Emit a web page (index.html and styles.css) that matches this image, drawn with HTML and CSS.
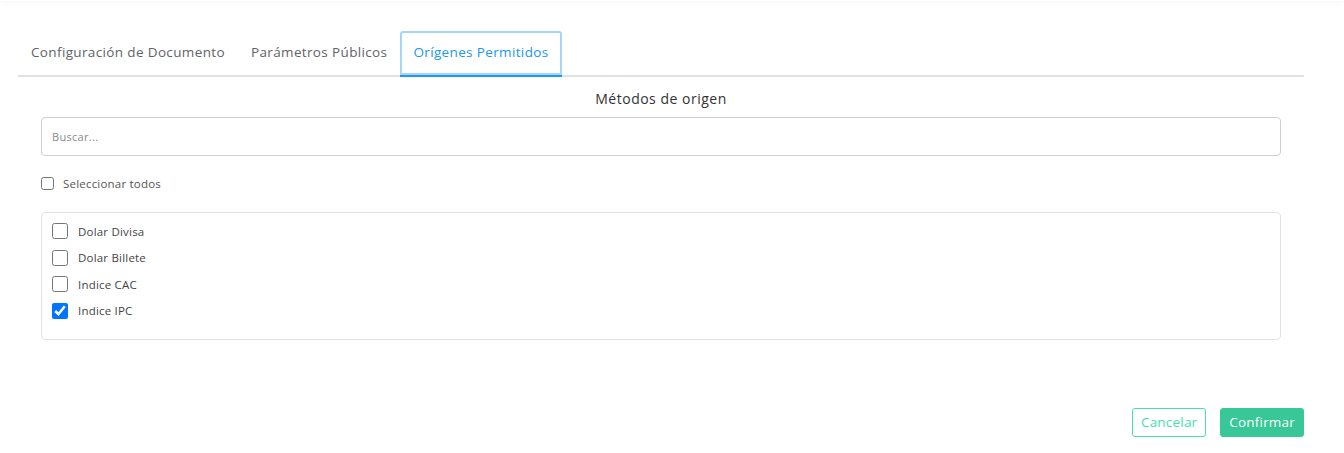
FILE: index.html
```html
<!DOCTYPE html>
<html>
  <head>
    <meta charset="utf-8" />
    <meta content="width=device-width, initial-scale=1" name="viewport" />
    <title>Orígenes Permitidos</title>
    <link rel="stylesheet" href="styles.css">
  </head>
  <body>
    <div class="topbar"></div>

    <div class="page">
      <div class="tabs">
        <div class="tab">Configuración de Documento</div>
        <div class="tab">Parámetros Públicos</div>
        <div class="tab active">Orígenes Permitidos</div>
      </div>

      <div class="panel">
        <div class="panel-title">Métodos de origen</div>

        <input class="search" type="text" placeholder="Buscar..." />

        <label class="select-all">
          <input type="checkbox" />
          <span>Seleccionar todos</span>
        </label>

        <div class="options">
          <label class="option"><input type="checkbox" /><span>Dolar Divisa</span></label>
          <label class="option"><input type="checkbox" /><span>Dolar Billete</span></label>
          <label class="option"><input type="checkbox" /><span>Indice CAC</span></label>
          <label class="option"><input type="checkbox" checked /><span>Indice IPC</span></label>
        </div>
      </div>

      <div class="actions">
        <button class="btn btn-outline">Cancelar</button>
        <button class="btn btn-primary">Confirmar</button>
      </div>
    </div>
  </body>
</html>
```

FILE: styles.css
```css
html, body {
  margin: 0;
  background-color: white;
}
body {
  font-family: "Open Sans", sans-serif;
  color: #333;
}
.topbar {
  height: 1px;
  box-shadow: 0 1px 4px rgba(0, 0, 0, 0.12);
}
.page {
  padding: 30px 40px 0 18px;
}
.tabs {
  display: flex;
  border-bottom: 2px solid #dee2e6;
}
.tab {
  padding: 0 13px;
  height: 44px;
  line-height: 42px;
  font-size: 13.5px;
  letter-spacing: 0.36px;
  color: #5f6368;
  margin-bottom: -2px;
  border-bottom: 2px solid transparent;
  white-space: nowrap;
}
.tab.active {
  color: #2196f3;
  border-bottom-color: #2196f3;
  box-shadow: inset 0 0 0 2px #a6d5fa;
  border-radius: 3px 3px 0 0;
}
.panel {
  padding: 0 23px;
}
.panel-title {
  text-align: center;
  font-size: 14px;
  letter-spacing: 0.5px;
  color: #333;
  line-height: 20px;
  margin-top: 12px;
  margin-bottom: 8px;
}
.search {
  display: block;
  box-sizing: border-box;
  width: 100%;
  height: 39px;
  border: 1px solid #cfcfcf;
  border-radius: 4px;
  padding: 0 10px;
  font-family: inherit;
  font-size: 11px;
  letter-spacing: 0.3px;
  color: #333;
  outline: none;
}
.search::placeholder {
  color: #8a8a8a;
}
.select-all {
  display: flex;
  align-items: center;
  gap: 9px;
  margin-top: 20px;
  font-size: 11.5px;
  letter-spacing: 0.2px;
  color: #555;
}
.select-all input {
  width: 13px;
  height: 13px;
  margin: 0;
}
.options {
  margin-top: 21px;
  border: 1px solid #e2e2e2;
  border-radius: 4px;
  padding: 10px 10px 20px;
  display: flex;
  flex-direction: column;
  gap: 10.6px;
}
.option {
  display: flex;
  align-items: center;
  gap: 10px;
  font-size: 11.5px;
  letter-spacing: 0.2px;
  color: #444;
  height: 16px;
}
.option input {
  width: 16px;
  height: 16px;
  margin: 0;
}
.actions {
  display: flex;
  justify-content: flex-end;
  gap: 14px;
  margin-top: 68px;
}
.btn {
  height: 29px;
  padding: 0 8px;
  border-radius: 3px;
  font-family: inherit;
  font-size: 13.5px;
  letter-spacing: 0.2px;
}
.btn-outline {
  background-color: white;
  border: 1px solid #44e0b2;
  color: #44e0b2;
}
.btn-primary {
  background-color: #38c796;
  border: 1px solid #38c796;
  color: white;
}
```
